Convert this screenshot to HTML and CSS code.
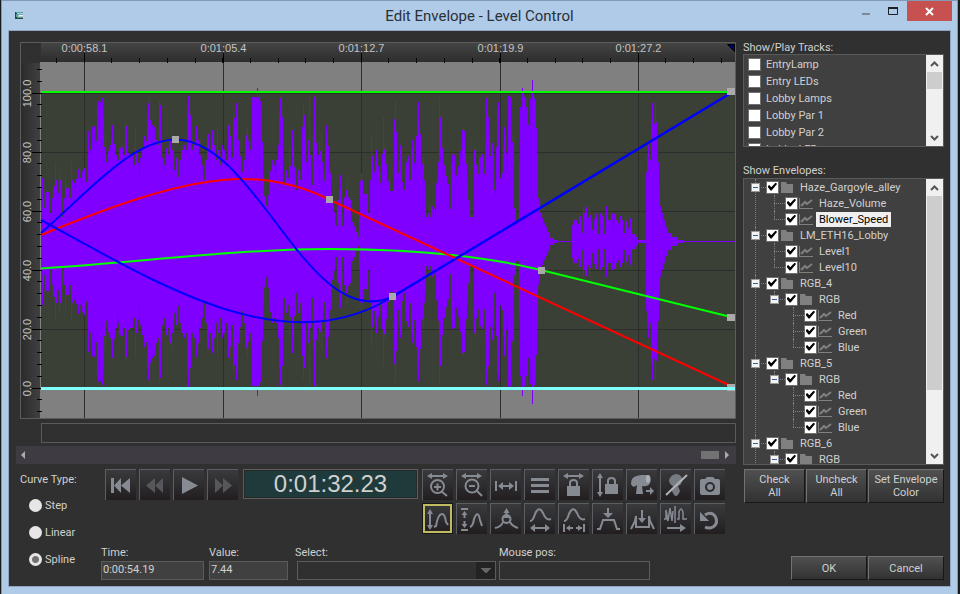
FILE: index.html
```html
<!DOCTYPE html>
<html lang="en">
<head>
<meta charset="utf-8">
<title>Edit Envelope - Level Control</title>
<link rel="stylesheet" href="styles.css">
</head>
<body>
<div class="window">
  <header class="titlebar">
    <svg class="app-icon" viewBox="0 0 8 7" aria-hidden="true"><path fill="#174f50" d="M0 0h8v1H2v5h6v1H0z"/><path fill="#4da89a" d="M1 0h7v1H1zM1 2h2v3H1z"/><path fill="#7b9cb0" d="M3 2h5v1H3z"/><path fill="#6f9c5c" d="M2 5h6v1H2z"/><path fill="#eef3f5" d="M4 3h4v1H4z"/></svg>
    <h1>Edit Envelope - Level Control</h1>
    <div class="window-buttons">
      <button class="win-min" aria-label="Minimize"><svg width="8" height="20" aria-hidden="true"><path fill="#7d8a9c" d="M0 12h8v2H0z"/></svg></button>
      <button class="win-max" aria-label="Maximize"><svg width="10" height="20" aria-hidden="true"><path fill="none" stroke="#1c1f24" d="M.5 7.500h9v6h-9z"/><path stroke="#1c1f24" stroke-width="2" d="M0 7h10"/></svg></button>
      <button class="win-close" aria-label="Close"><svg width="9" height="9" aria-hidden="true"><path stroke="#fff" stroke-width="2" d="M1 1l7 7M8 1L1 8"/></svg></button>
    </div>
  </header>
  <main class="client">
    <section class="editor">
      <svg class="chart" id="chart" viewBox="20 42 716 377" role="img" aria-label="Envelope curves">
        <defs>
          <linearGradient id="rulerTop" x2="0" y2="1"><stop stop-color="#444"/><stop offset="1" stop-color="#2d2d2d"/></linearGradient>
          <linearGradient id="rulerLeft"><stop stop-color="#2b2b2b"/><stop offset="1" stop-color="#414141"/></linearGradient>
        </defs>
        <path fill="#303030" d="M20 42h716v377H20z"/>
        <path fill="url(#rulerTop)" d="M41 43h694v19H41z"/>
        <path fill="url(#rulerLeft)" d="M21 63h20v355H21z"/>
        <path fill="#808080" d="M40 62h695v356H40z"/>
        <path fill="#3a4036" d="M41 92h694v297H41z"/>
        <g id="grid" stroke="#2d2d2d"></g>
        <path id="wave" fill="#8000ff" shape-rendering="crispEdges"/>
        <path fill="#8000ff" d="M257 88h1v8h-1zM522 88h1v8h-1zM532 80h1v16h-1zM257 388h1v8h-1zM522 388h1v8h-1zM532 388h1v16h-1z"/>
        <g id="ticks" stroke="#000"></g>
        <g id="labels" class="chart-labels"></g>
        <path fill="#00006e" stroke="#000" d="M727.500 44.500H734.500V51.500z"/>
        <g fill="none" stroke-width="2">
          <path stroke="#0f0" d="M41 92H731"/>
          <path stroke="#0f0" d="M41 268.500C150 261 240 249 330 249C410 249 480 255 541 270L731 317"/>
          <path stroke="#f00" d="M41 235C100 211 180 179 242 179C276 179 306 188 329 199.500L731 386"/>
          <path stroke="#00f" d="M41 233C90 190 132 140 176 139.500C258 141 308 333 392 297"/>
          <path stroke="#00f" d="M41 220C162 286 285 363 392 297"/>
          <path stroke="#00f" stroke-width="2.500" d="M392 297L731 93"/>
          <path stroke="#80ffff" stroke-width="3" d="M41 388.500H735"/>
        </g>
        <path fill="#aaa" d="M172 136h7v7h-7zM326 196h7v7h-7zM389 293h7v7h-7zM538 267h7v7h-7zM727 88h8v7h-8zM727 314h8v7h-8zM727 384h8v3h-8zM727 390h8v1h-8z"/>
        <path fill="none" stroke="#5c5c5c" d="M20.500 42.500h715v376h-715z"/>
      </svg>
      <div class="strip"></div>
      <div class="hscroll">
        <svg width="6" height="8" aria-hidden="true"><path fill="#aaa" d="M5 0v8L1 4z"/></svg>
        <span class="hscroll-thumb"></span>
        <svg width="6" height="8" aria-hidden="true"><path fill="#aaa" d="M1 0v8l4-4z"/></svg>
      </div>
      <div class="controls">
        <fieldset class="curve-type">
          <legend>Curve Type:</legend>
          <label><input type="radio" name="curve">Step</label>
          <label><input type="radio" name="curve">Linear</label>
          <label><input type="radio" name="curve" checked>Spline</label>
        </fieldset>
        <div class="transport-area">
          <div class="toolbar">
            <div class="transport">
              <button class="tool" aria-label="To start"><svg viewBox="0 0 31 31"><path d="M6 9h3v15H6zM16 9v15l-7-7.500zM25 9v15l-9-7.500z"/></svg></button>
              <button class="tool dim" aria-label="Rewind"><svg viewBox="0 0 31 31"><path d="M16 9v15l-9-7.500zM24 9v15l-8-7.500z"/></svg></button>
              <button class="tool" aria-label="Play"><svg viewBox="0 0 31 31"><path d="M9 8v17l16-8.500z"/></svg></button>
              <button class="tool dim" aria-label="Fast forward"><svg viewBox="0 0 31 31"><path d="M8 9v15l8-7.500zM16 9v15l9-7.500z"/></svg></button>
            </div>
            <output class="clock">0:01:32.23</output>
            <div class="tools">
              <button class="tool" aria-label="Zoom in"><svg viewBox="0 0 31 31"><path d="M5 7l5-3v6zM26 7l-5-3v6z"/><path class="s" d="M8 7h15M19 22l6 5M12 18h7M15.500 14.500v7"/><circle class="s" cx="15.500" cy="17.500" r="6.500"/></svg></button>
              <button class="tool" aria-label="Zoom out"><svg viewBox="0 0 31 31"><path d="M5 7l5-3v6zM26 7l-5-3v6z"/><path class="s" d="M8 7h15M20 21l6 6M13 17h6"/><circle class="s" cx="16" cy="17" r="6.500"/></svg></button>
              <button class="tool" aria-label="Fit width"><svg viewBox="0 0 31 31"><path d="M8 17l5-4v8zM24 17l-5-4v8z"/><path class="s" d="M6 12v10M26 12v10M10 17h12"/></svg></button>
              <button class="tool" aria-label="List"><svg viewBox="0 0 31 31"><path d="M7 9h18v3H7zM7 15h18v3H7zM7 21h18v3H7z"/></svg></button>
              <button class="tool" aria-label="Lock time"><svg viewBox="0 0 31 31"><path d="M5 7l5-3v6zM26 7l-5-3v6zM9 17h13v10H9z"/><path class="s" d="M8 7h15M12 18v-4q0-3 3.500-3t3.500 3v4"/></svg></button>
              <button class="tool" aria-label="Lock value"><svg viewBox="0 0 31 31"><path d="M8 4l3 5H5zM8 28l3-5H5zM13 15h13v10H13z"/><path class="s" d="M8 8v16M16 16v-4q0-3 3.500-3t3.500 3v4"/></svg></button>
              <button class="tool" aria-label="Next fixture"><svg viewBox="0 0 31 31"><path d="M5 15Q4 7 15 6l8 0q3 3 1 8-2 4-8 3l1 8h-7l1-9q-4 4-6-1zM20 21h4v-3l4 4-4 4v-3h-4z"/><ellipse cx="22" cy="10" rx="2" ry="4" fill="#aab0b5"/></svg></button>
              <button class="tool" aria-label="Lamp off"><svg viewBox="0 0 31 31"><path fill="#777b82" d="M9 11q2-6 8-6 6 1 5 8-1 3-4 4l2 5q-2 5-4 5t-4-5l1-5q-4-2-4-6z"/><path class="s bright" d="M6 26L27 6"/></svg></button>
              <button class="tool" aria-label="Snapshot"><svg viewBox="0 0 31 31"><path fill-rule="evenodd" d="M6 12q0-2 2-2h3l2-2h6l2 2h3q2 0 2 2v12q0 2-2 2H8q-2 0-2-2zM16 13a5 5 0 1 0 0 10 5 5 0 0 0 0-10zM16 15a3 3 0 1 1 0 6 3 3 0 0 1 0-6z"/></svg></button>
              <button class="tool selected" aria-label="Full range"><svg viewBox="0 0 31 31"><path d="M8 6l3 5H5zM8 27l3-5H5z"/><path class="s" d="M8 10v14M12 24l2-1q2-12 6-12 3 0 4 8l2 3"/></svg></button>
              <button class="tool" aria-label="Fit values"><svg viewBox="0 0 31 31"><path d="M5 5h7v2H5zM8.500 8l3 4h-6zM8.500 25l3-4h-6zM5 26h7v2H5z"/><path class="s" d="M8.500 11v4M8.500 18v4M14 24q3-1 4-8 4-10 6 1l2 6"/></svg></button>
              <button class="tool" aria-label="Add point"><svg viewBox="0 0 31 31"><path d="M16.500 5l3 5h-6z"/><circle class="s" cx="16.500" cy="16" r="4"/><path class="s" d="M16.500 9v5M5 25q6-1 8-6M28 25q-6-2-8-6"/><path d="M13 15h7v-2h-7z"/></svg></button>
              <button class="tool" aria-label="Shift curve"><svg viewBox="0 0 31 31"><path class="s" d="M6 18q3 0 5-7 4-9 8-1 3 8 8 6M8 25h16"/><path d="M6 25l5-4v8zM26 25l-5-4v8z"/></svg></button>
              <button class="tool" aria-label="Stretch curve"><svg viewBox="0 0 31 31"><path class="s" d="M6 18q3 0 5-7 4-9 8-1 3 8 8 6M6 21v8M26 21v8M9 25h6M18 25h6"/><path d="M8 25l4-3v6zM24 25l-4-3v6z"/></svg></button>
              <button class="tool" aria-label="Insert time"><svg viewBox="0 0 31 31"><path class="s" d="M5 26h3l3-9h11l3 9h3M16 5v7"/><path d="M16 15l5-5H11z"/></svg></button>
              <button class="tool" aria-label="Paste curve"><svg viewBox="0 0 31 31"><path class="s" d="M5 26l4-8 1-5v11h13V13l1 5 4 8M16 7v9"/><path d="M16 20l4-5h-8z"/></svg></button>
              <button class="tool" aria-label="Wave to curve"><svg viewBox="0 0 31 31"><path class="s thin" d="M4 16h2V7l2 11 2-13 2 13 1-10M15 3v17M17 16h2V9q2-6 4 0v7h4"/><path class="s" d="M7 25h16"/><path d="M26 25l-6-4v8z"/></svg></button>
              <button class="tool" aria-label="Undo"><svg viewBox="0 0 31 31"><path class="s heavy" d="M11 12q6-4 10 1 4 7-2 11-4 2-8 0"/><path d="M6 9v9h9z"/></svg></button>
            </div>
          </div>
          <div class="fields">
            <label class="f-time">Time:<input type="text" value="0:00:54.19"></label>
            <label class="f-value">Value:<input type="text" value="7.44"></label>
            <label class="f-select">Select:<select><option></option></select></label>
            <label class="f-mouse">Mouse pos:<input class="dark" type="text"></label>
          </div>
        </div>
      </div>
    </section>
    <aside class="side">
      <h2>Show/Play Tracks:</h2>
      <div class="box tracks">
        <ul class="track-list">
          <li><label><input type="checkbox">EntryLamp</label></li>
          <li><label><input type="checkbox">Entry LEDs</label></li>
          <li><label><input type="checkbox">Lobby Lamps</label></li>
          <li><label><input type="checkbox">Lobby Par 1</label></li>
          <li><label><input type="checkbox">Lobby Par 2</label></li>
          <li><label><input type="checkbox">Lobby LEDs</label></li>
        </ul>
        <div class="vscroll"><svg width="9" height="6" aria-hidden="true"><path d="M1 5l3.500-3.500L8 5"/></svg><span class="vthumb"></span><svg width="9" height="6" aria-hidden="true"><path d="M1 1l3.500 3.500L8 1"/></svg></div>
      </div>
      <h2 class="second">Show Envelopes:</h2>
      <div class="box envelopes">
        <ul class="tree" id="tree"></ul>
        <div class="vscroll"><svg width="9" height="6" aria-hidden="true"><path d="M1 5l3.500-3.500L8 5"/></svg><span class="vthumb long"></span><svg width="9" height="6" aria-hidden="true"><path d="M1 1l3.500 3.500L8 1"/></svg></div>
      </div>
      <div class="row-buttons">
        <button class="btn">Check<br>All</button>
        <button class="btn">Uncheck<br>All</button>
        <button class="btn wide">Set Envelope<br>Color</button>
      </div>
      <div class="dialog-buttons">
        <button class="btn">OK</button>
        <button class="btn">Cancel</button>
      </div>
    </aside>
  </main>
</div>
<script src="app.js"></script>
</body>
</html>
```
FILE: styles.css
```css
* { box-sizing: border-box; }
body {
  margin: 0;
  min-height: 100vh;
  display: flex;
  background: #171c1b;
  color: #d0d0d0;
  font: 11px/13px Roboto, "Liberation Sans", sans-serif;
}
button, input, select { font: inherit; color: inherit; margin: 0; }
h1, h2, ul, fieldset { margin: 0; padding: 0; border: 0; font-weight: 400; list-style: none; }
svg { display: block; }

.window {
  flex: 1;
  min-width: 0;
  margin: 0 2px 1px 1px;
  border: 1px solid #8398b2;
  background: #b0cbe8;
  display: flex;
  flex-direction: column;
}
.titlebar { display: flex; position: relative; height: 29px; justify-content: space-between; }
.app-icon { width: 8px; height: 7px; margin: 11px 0 0 13px; }
.titlebar h1 {
  position: absolute;
  inset: 0;
  text-align: center;
  color: #2a3038;
  font: 15px/30px Roboto, sans-serif;
}
.window-buttons { display: flex; position: relative; margin-right: 5px; height: 20px; }
.window-buttons button { border: 0; padding: 0; background: none; display: flex; justify-content: center; }
.win-min { width: 26px; }
.win-max { width: 28px; }
.window-buttons .win-close { width: 45px; background: #c75050; align-items: center; }

.client {
  flex: 1;
  display: flex;
  gap: 7px;
  margin: 0 6px 7px;
  padding: 11px 6px 6px 11px;
  border: 1px solid #8ea6c2;
  background: #303030;
}
.editor { flex: 1; min-width: 0; }
.chart { width: 100%; height: auto; }
.chart-labels { font: 11px "Liberation Sans", sans-serif; fill: #c4c4c4; }
.strip { height: 20px; margin: 4px 0 3px 21px; border: 1px solid #5a5a5a; }
.hscroll {
  display: flex;
  align-items: center;
  height: 18px;
  margin-left: -4px;
  padding: 0 6px 0 4px;
  gap: 5px;
  background: #3e3c42;
}
.hscroll-thumb { width: 18px; height: 8px; margin-left: auto; background: #727272; }

.controls { display: flex; padding-top: 5px; }
.curve-type { width: 81px; flex: none; margin-top: 4px; }
.curve-type legend { padding: 0; }
.curve-type label { display: flex; align-items: center; gap: 3px; height: 14px; margin: 0 0 13px 9px; }
.curve-type legend + label { margin-top: 12px; }
input[type="radio"] {
  appearance: none;
  width: 13px;
  height: 13px;
  border-radius: 50%;
  background: #e6e6e6;
}
input[type="radio"]:checked { background: radial-gradient(circle, #707070 3px, #e6e6e6 4px); }
.transport-area { flex: 1; min-width: 0; }
.toolbar { display: flex; align-items: flex-start; padding-left: 4px; }
.transport { display: flex; gap: 3px; margin-right: 5px; }
.tool {
  width: 31px;
  height: 31px;
  padding: 0;
  border: 0;
  background: linear-gradient(#3a3b3e, #221e20);
  box-shadow: inset 1px 1px #5b5f64;
}
.tool svg { width: 31px; height: 31px; fill: #868b93; }
.tool .s { fill: none; stroke: #868b93; stroke-width: 2; }
.tool .bright { stroke: #b0b4b8; }
.tool .thin { stroke-width: 1.500; }
.tool .heavy { stroke-width: 3; }
.tool.dim svg { fill: #55575b; }
.tool.selected { box-shadow: inset 0 0 0 1px #181818, inset 0 0 0 3px #c0bb60; }
.clock {
  width: 175px;
  height: 30px;
  margin-right: 4px;
  border: 1px solid #5c5c5c;
  box-shadow: inset 0 0 0 1px #292b2b;
  background: #1e3a3b;
  text-align: center;
  font: 24px/28px "Liberation Sans", sans-serif;
}
.tools { display: grid; grid-template-columns: repeat(9, 31px); gap: 3px; }
.fields { display: flex; margin-top: 12px; }
.fields label { display: block; }
.fields input, .fields select {
  display: block;
  width: 100%;
  height: 19px;
  margin-top: 2px;
  padding: 0 1px 3px;
  border: 1px solid #5c5c5c;
  border-radius: 0;
  background: #404040;
  color: #d0d0d0;
}
.fields .dark { background: #303030; }
.fields select {
  appearance: none;
  background: linear-gradient(#666, #666) no-repeat right 4px top 6px / 10px 1px,
    linear-gradient(#666, #666) no-repeat right 5px top 7px / 8px 1px,
    linear-gradient(#666, #666) no-repeat right 6px top 8px / 6px 1px,
    linear-gradient(#666, #666) no-repeat right 7px top 9px / 4px 1px,
    linear-gradient(#666, #666) no-repeat right 8px top 10px / 2px 1px,
    linear-gradient(#232323, #232323) no-repeat right / 19px 100%, #303030;
}
.f-time { width: 103px; margin-right: 5px; }
.f-value { width: 79px; margin-right: 7px; }
.f-select { width: 201px; margin-right: 3px; }
.fields .f-select select { width: 199px; margin-left: 2px; }
.f-mouse { width: 151px; }

.side { width: 201px; flex: none; display: flex; flex-direction: column; }
.side h2 { font-size: 11px; line-height: 12px; }
.side .second { margin: 18px 0 1px; }
.box { display: flex; border: 1px solid #5a5a5a; background: #404040; overflow: hidden; }
.tracks { height: 93px; }
.track-list { flex: 1; padding-top: 1px; }
.track-list label { display: flex; align-items: center; gap: 5px; height: 17px; padding-left: 4px; }
input[type="checkbox"] {
  appearance: none;
  flex: none;
  width: 13px;
  height: 13px;
  border: 1px solid #707070;
  background: #fff;
}
input[type="checkbox"]:checked::before {
  content: "";
  display: block;
  width: 9px;
  height: 8px;
  margin: 1px;
  background: #000;
  clip-path: polygon(0 45%, 14% 30%, 36% 58%, 86% 0, 100% 18%, 40% 100%, 28% 100%, 0 60%);
}
.vscroll {
  width: 17px;
  display: flex;
  flex-direction: column;
  align-items: center;
  padding: 6px 0 5px;
  background: #f0f0f0;
}
.vscroll svg { flex: none; }
.vscroll path { fill: none; stroke: #555; stroke-width: 2; }
.vthumb { width: 15px; height: 17px; margin: 5px 0 auto; background: #cdcdcd; }
.vthumb.long { height: 194px; }
.envelopes { height: 287px; }
.tree { flex: 1; padding-left: 7px; }
.tree ul { padding-left: 19px; }
.tree li { position: relative; }
.tree li::before {
  content: "";
  position: absolute;
  left: 4px;
  top: 0;
  bottom: 0;
  border-left: 1px dotted #808080;
}
.tree ul > li:last-child::before { bottom: auto; height: 8px; }
.node { display: flex; align-items: center; height: 16px; position: relative; }
.node::before { content: ""; width: 15px; border-top: 1px dotted #808080; margin-left: 4px; margin-right: -4px; }
.node label { display: flex; align-items: center; }
.node svg { width: 14px; height: 12px; margin: 0 1px 0 1px; fill: #808080; }
.node .text { padding: 0 3px; margin-left: 2px; line-height: 15px; }
.node .text.current { background: #f0f0f0; color: #000; }
.expander {
  position: absolute;
  left: 0;
  top: 4px;
  width: 9px;
  height: 9px;
  padding: 0;
  border: 1px solid #979797;
  background: linear-gradient(#3555a5, #3555a5) no-repeat center / 5px 1px, #f4f4f4;
}
.row-buttons { display: flex; gap: 1px; margin: 4px 0 0 1px; }
.btn {
  padding: 0;
  border: 1px solid;
  border-color: #727272 #171717 #171717 #727272;
  background: linear-gradient(#505050, #323232);
  line-height: 13px;
}
.row-buttons .btn { width: 61px; height: 34px; }
.row-buttons .wide { flex: 1; }
.dialog-buttons { display: flex; gap: 1px; justify-content: flex-end; margin-top: auto; }
.dialog-buttons .btn { width: 76px; height: 24px; }
```
FILE: app.js
```js
const line = (x1, y1, x2, y2) => `<path d="M${x1} ${y1}L${x2} ${y2}"/>`;

// Waveform upper edge: x and y pairs, mirrored about the centre line.
const CENTER = 241.5;
const wave = `41 178 42 178 43 198 44 208 45 192 49 198 50 213 52 198 53 186 55 163 56 180 57 193 59 170 60 180 62 217 63 198 65 171 66 188 69 198 71 161 72 180 74 183 75 192 76 179 78 169 79 178 81 186 82 171 84 168 85 178 86 182 88 131 89 155 90 150 91 145 92 127 93 150 94 126 95 146 96 141 97 107 98 101 99 126 100 102 101 108 102 98 103 117 104 147 105 132 106 162 108 151 109 147 110 145 111 140 112 125 113 144 115 155 117 168 118 160 119 148 121 147 123 155 125 123 126 126 127 153 130 155 133 165 135 126 136 150 137 163 139 178 140 158 142 148 144 136 145 141 147 115 148 103 149 97 150 120 151 125 153 133 154 127 155 140 157 145 159 100 160 105 161 142 162 158 164 165 166 148 168 155 169 140 171 133 172 150 174 170 176 158 178 177 179 160 181 150 183 145 185 150 187 110 188 96 189 97 190 115 191 150 193 138 194 145 196 126 197 140 199 155 201 165 203 180 205 160 207 134 209 150 211 143 212 130 214 145 216 160 217 128 218 150 220 165 222 145 223 150 225 160 227 160 228 125 230 136 231 158 233 113 234 118 235 120 236 103 237 110 238 140 240 156 241 172 243 160 245 135 247 126 248 141 249 150 251 140 252 97 260 101 261 111 262 142 263 178 264 196 266 206 268 195 269 178 270 171 272 160 273 165 275 178 276 160 278 145 279 114 280 98 281 96 282 117 283 185 285 170 287 178 289 148 290 166 292 130 293 145 294 167 296 190 298 170 300 180 302 127 303 104 304 115 305 126 306 162 307 176 308 140 309 96 310 155 311 185 313 134 314 97 316 143 317 164 318 155 319 140 320 151 321 133 322 162 323 172 324 181 325 145 326 125 327 133 328 146 329 181 330 173 331 193 332 203 334 212 335 226 337 200 339 189 340 175 341 188 342 226 344 198 345 197 346 190 347 178 348 197 350 200 351 222 354 226 356 232 358 237 359 213 360 181 361 173 362 180 363 194 367 193 368 213 370 180 371 134 372 156 373 172 375 160 376 150 377 167 378 166 379 171 380 183 381 172 382 154 383 116 384 149 385 143 386 164 387 181 389 177 390 191 393 189 394 119 395 100 396 132 397 173 399 160 400 145 401 148 402 182 403 190 405 170 406 162 407 161 408 156 409 180 411 150 412 140 413 146 414 163 415 173 416 136 417 117 418 102 419 123 420 134 421 164 423 156 424 180 425 190 426 217 428 213 429 205 430 217 431 206 433 216 434 209 435 218 436 183 437 182 438 162 439 97 440 117 442 148 443 165 445 165 446 176 447 184 449 209 451 163 452 154 453 167 454 155 455 181 456 175 458 166 459 180 460 151 461 160 462 130 463 128 464 131 465 154 466 164 467 182 468 200 470 217 473 223 474 150 475 147 476 165 478 174 479 157 481 154 483 157 484 174 485 143 486 98 487 110 488 117 489 135 490 156 491 146 492 143 493 158 494 190 495 196 496 147 497 111 498 102 499 110 500 178 501 173 503 145 504 127 505 134 506 153 507 168 508 96 509 102 510 97 511 144 512 142 513 136 514 208 516 222 519 165 520 107 521 113 522 94 523 97 526 107 527 98 528 125 530 99 531 113 532 94 533 96 534 98 535 102 536 128 537 155 538 198 539 203 540 213 542 218 543 223 545 227 547 232 550 238 554 240 558 241 571 241 572 225 573 219 574 220 577 224 579 216 581 221 582 233 583 208 584 213 585 207 587 218 589 206 590 215 591 222 592 230 594 219 595 214 597 222 598 234 600 213 602 216 604 234 606 206 607 215 608 220 611 213 613 231 614 214 616 220 618 223 620 216 622 220 623 233 625 215 626 221 628 228 630 218 632 234 636 237 638 240 645 240 646 172 647 157 648 145 649 154 650 160 651 120 652 103 653 118 654 124 655 102 656 122 657 140 658 162 659 190 660 206 661 213 663 220 665 227 668 233 672 237 678 240 684 241 735 241`
  .split(" ").map(Number);
let upper = "";
let lower = "";
for (let i = 0; i < wave.length; i += 2) {
  const next = wave[i + 2] ?? 735;
  upper += `L${wave[i]} ${wave[i + 1]}H${next}`;
  lower = `L${next} ${2 * CENTER - wave[i + 1]}H${wave[i]}` + lower;
}
document.getElementById("wave").setAttribute("d", `M41 ${CENTER}${upper}${lower}Z`);

const majors = [84.5, 223.5, 361.5, 500.5, 638.5];
const times = ["0:00:58.1", "0:01:05.4", "0:01:12.7", "0:01:19.9", "0:01:27.2"];
let grid = "";
let ticks = "";
let labels = "";
majors.forEach((x, i) => {
  grid += line(x, 62, x, 418);
  ticks += line(x, 53, x, 63);
  labels += `<text x="${x}" y="52" text-anchor="middle">${times[i]}</text>`;
});
for (let i = 0; i < 25; i++) {
  const x = Math.round(56 + i * 27.7) + 0.5;
  ticks += line(x, 58, x, 63);
}
for (let i = 0; i < 6; i++) {
  const y = 93.5 + i * 59;
  grid += line(41, y, 735, y);
  ticks += line(32, y, 41, y);
  labels += `<text transform="translate(31 ${y}) rotate(-90)" text-anchor="middle">${100 - i * 20}.0</text>`;
}
for (let i = 0; i < 30; i++) {
  const y = Math.round(69 + i * 11.8) + 0.5;
  ticks += line(37, y, 42, y);
}
document.getElementById("grid").innerHTML = grid;
document.getElementById("ticks").innerHTML = ticks;
document.getElementById("labels").innerHTML = labels;

const rgb = name => [name, [["RGB", [["Red"], ["Green"], ["Blue"]]]]];
const nodes = [
  ["Haze_Gargoyle_alley", [["Haze_Volume"], ["Blower_Speed"]]],
  ["LM_ETH16_Lobby", [["Level1"], ["Level10"]]],
  rgb("RGB_4"), rgb("RGB_5"),
  ["RGB_6", [["RGB", []]]],
];
const folder = '<svg viewBox="0 0 14 12"><path d="M1 1h5l1 2h6v9H1z"/></svg>';
const curve = '<svg viewBox="0 0 14 12"><path d="M0 1h1v10h13v1H0z"/><path fill="none" stroke="#808080" stroke-width="2" d="M2 9l4-4 2 2 5-4"/></svg>';
const render = list => list.map(([name, kids]) => `<li><div class="node">${
  kids ? `<button class="expander" aria-label="Collapse ${name}"></button>` : ""
}<label><input type="checkbox" checked>${kids ? folder : curve}<span class="text${
  name === "Blower_Speed" ? " current" : ""
}">${name}</span></label></div>${kids ? `<ul>${render(kids)}</ul>` : ""}</li>`).join("");
document.getElementById("tree").innerHTML = render(nodes);
```
